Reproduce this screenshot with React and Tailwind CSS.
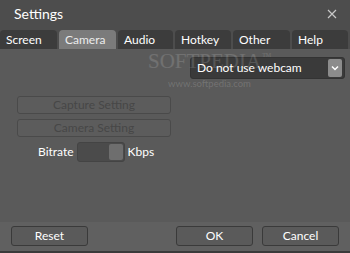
import React from "react";

const tabs = [
  { label: "Screen", w: "w-[57px]" },
  { label: "Camera", w: "w-[57px]", active: true },
  { label: "Audio", w: "w-[55px]" },
  { label: "Hotkey", w: "w-[56px]" },
  { label: "Other", w: "w-[57px]" },
  { label: "Help", w: "w-[56px]" },
];

function Button({ children, className = "" }) {
  return (
    <button
      className={`h-[20px] rounded-[3px] border border-[#3a3a3a] bg-[#5a5a5a] text-[12px] leading-none text-white ${className}`}
    >
      {children}
    </button>
  );
}

export default function App() {
  return (
    <div
      className="w-[350px] h-[253px] flex flex-col bg-[#5a5a5a] overflow-hidden select-none"
      style={{ fontFamily: 'Lato, "Open Sans", sans-serif' }}
    >
      {/* title bar */}
      <div className="h-[30px] shrink-0 bg-[#4d4d4d] flex items-center justify-between pl-[14px] pr-[13px]">
        <span className="text-[14px] text-white pb-[4px]">Settings</span>
        <svg width="10" height="10" viewBox="0 0 10 10" className="mb-[2px]">
          <path d="M1 1L9 9M9 1L1 9" stroke="#c8c8c8" strokeWidth="1.2" />
        </svg>
      </div>

      {/* tabs */}
      <div className="h-[19px] shrink-0 bg-[#4d4d4d] flex gap-[2px]">
        {tabs.map((t) => (
          <div
            key={t.label}
            className={`${t.w} h-full rounded-t-[4px] flex items-center pl-[6px] text-[12px] leading-none ${
              t.active ? "bg-[#7b7b7b] text-[#ececec]" : "bg-[#3c3c3c] text-white"
            }`}
          >
            {t.label}
          </div>
        ))}
      </div>

      {/* content */}
      <div className="relative flex-1 flex flex-col">
        {/* watermark overlay */}
        <span
          className="absolute z-10 left-[148px] top-[2px] text-[21px] leading-none text-white/[0.14] pointer-events-none"
          style={{ fontFamily: '"Liberation Serif", serif' }}
        >
          SOFTPEDIA<sup className="text-[6px] align-super ml-[1px]">TM</sup>
        </span>
        <span className="absolute z-10 left-[168px] top-[30px] text-[9.5px] leading-none text-white/[0.16] pointer-events-none">
          www.softpedia.com
        </span>

        <div className="flex justify-end pt-[8px] pr-[5px]">
          <div className="w-[155px] h-[22px] rounded-[3px] bg-[#3a3a3a] border border-[#333] flex items-center justify-between pl-[6px] pr-[2px]">
            <span className="text-[12px] text-white leading-none">Do not use webcam</span>
            <div className="w-[14px] h-[18px] rounded-[2px] bg-[#8c8c8c] flex items-center justify-center">
              <svg width="8" height="6" viewBox="0 0 8 6">
                <path d="M1 1.5L4 4.5L7 1.5" stroke="#ffffff" strokeWidth="1.5" fill="none" />
              </svg>
            </div>
          </div>
        </div>

        <div className="flex flex-col pl-[17px] mt-[17px] gap-[5px]">
          <button className="w-[154px] h-[18px] rounded-[3px] border border-[#4a4a4a] bg-[#5c5c5c] text-[12px] leading-none text-[#474747]">
            Capture Setting
          </button>
          <button className="w-[154px] h-[18px] rounded-[3px] border border-[#4a4a4a] bg-[#5c5c5c] text-[12px] leading-none text-[#474747]">
            Camera Setting
          </button>
        </div>

        <div className="flex items-center pl-[38px] mt-[5px] gap-[3px]">
          <span className="text-[12px] text-white leading-none">Bitrate</span>
          <div className="w-[48px] h-[20px] rounded-[3px] bg-[#4b4b4b] border border-[#444] flex justify-end items-center pr-[1px]">
            <div className="w-[14px] h-[16px] rounded-[2px] bg-[#6e6e6e]" />
          </div>
          <span className="text-[12px] text-white leading-none">Kbps</span>
        </div>
      </div>

      {/* footer */}
      <div className="h-[31px] shrink-0 bg-[#606060] border-b-[2px] border-[#3a3a3a] flex items-center px-[11px] pb-[1px]">
        <Button className="w-[77px]">Reset</Button>
        <div className="flex-1" />
        <Button className="w-[77px]">OK</Button>
        <Button className="w-[77px] ml-[9px]">Cancel</Button>
      </div>
    </div>
  );
}
